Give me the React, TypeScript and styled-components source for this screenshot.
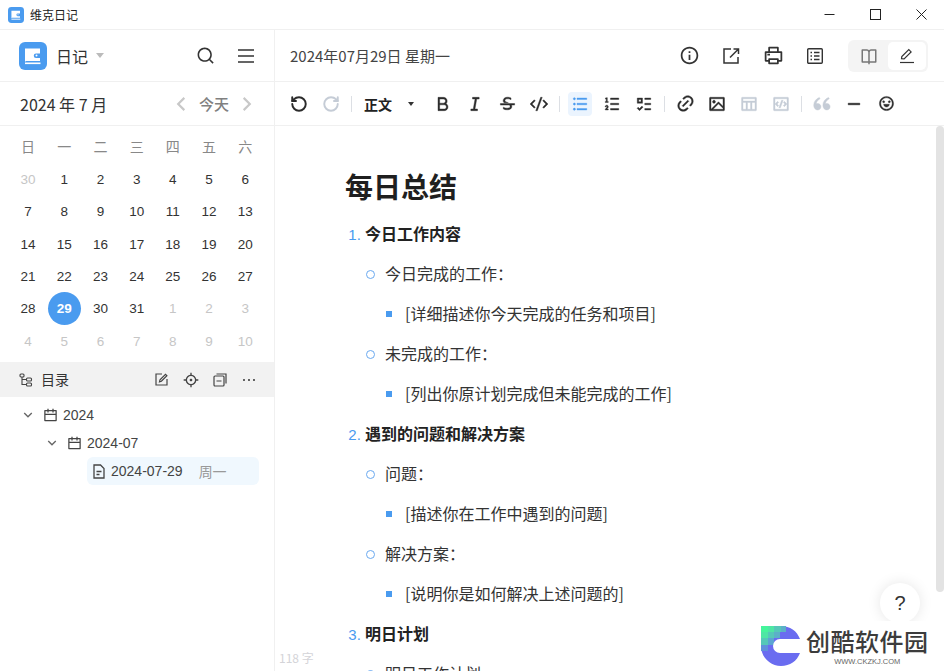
import { type FC, type ReactNode } from "react";
import styled, { createGlobalStyle } from "styled-components";
import { RotateCcw, RotateCw } from "lucide-react";
import {
  RiArrowDownSLine,
  RiArrowLeftSLine,
  RiArrowRightSLine,
  RiBold,
  RiCalendarLine,
  RiCodeBoxLine,
  RiCodeSSlashLine,
  RiDoubleQuotesL,
  RiEmotionLine,
  RiImageLine,
  RiInformationLine,
  RiItalic,
  RiLink,
  RiListOrdered2,
  RiListUnordered,
  RiMoreLine,
  RiPrinterLine,
  RiSearchLine,
  RiStrikethrough,
  RiSubtractLine,
  RiTableLine,
  RiListCheck3,
  RiFocus3Line,
  RiBookOpenLine,
} from "react-icons/ri";

const FONT = `"Noto Sans CJK SC", "Noto Sans", sans-serif`;

const GlobalStyle = createGlobalStyle`
  html, body {
    margin: 0;
    padding: 0;
    background: #fff;
  }
  body {
    font-family: ${FONT};
    color: #333;
    overflow: hidden;
  }
  * {
    box-sizing: border-box;
  }
`;

const Window = styled.div`
  position: relative;
  width: 944px;
  height: 671px;
  display: flex;
  flex-direction: column;
  overflow: hidden;
`;

const TitleBar = styled.div`
  height: 30px;
  flex: none;
  display: flex;
  align-items: center;
  padding-left: 8px;
  border-bottom: 1px solid #f0f0f0;
  font-size: 12px;
  color: #222;
`;

const TitleText = styled.span`
  margin-left: 6px;
`;

const WinButtons = styled.div`
  margin-left: auto;
  display: flex;
  height: 100%;
`;

const WinButton = styled.div`
  width: 46px;
  display: flex;
  align-items: center;
  justify-content: center;
`;

const Body = styled.div`
  flex: 1;
  display: flex;
  min-height: 0;
`;

const Sidebar = styled.aside`
  width: 275px;
  flex: none;
  border-right: 1px solid #f0f0f0;
  display: flex;
  flex-direction: column;
`;

const SideHeader = styled.div`
  height: 52px;
  flex: none;
  display: flex;
  align-items: center;
  padding: 0 20px 0 19px;
  border-bottom: 1px solid #f0f0f0;
`;

const NotebookName = styled.span`
  font-size: 16px;
  margin-left: 9px;
  color: #333;
`;

const Caret = styled.span<{ $color?: string; $w?: number }>`
  display: inline-block;
  width: 0;
  height: 0;
  margin-left: 8px;
  border-left: ${(p) => p.$w ?? 4}px solid transparent;
  border-right: ${(p) => p.$w ?? 4}px solid transparent;
  border-top: ${(p) => (p.$w ?? 4) + 1}px solid ${(p) => p.$color ?? "#bbb"};
`;

const HeaderIcons = styled.div`
  margin-left: auto;
  display: flex;
  align-items: center;
  gap: 23px;
  color: #333;
`;

const MonthBar = styled.div`
  height: 44px;
  flex: none;
  display: flex;
  align-items: center;
  padding: 0 14px 0 20px;
  border-bottom: 1px solid #f0f0f0;
  font-size: 16px;
  color: #333;
`;

const MonthNav = styled.div`
  margin-left: auto;
  display: flex;
  align-items: center;
  gap: 5px;
  color: #c8c8c8;
`;

const TodayLabel = styled.span`
  font-size: 15px;
  font-weight: 500;
  color: #808080;
`;

const Calendar = styled.div`
  flex: none;
  height: 236px;
  padding: 5px 10px;
  display: grid;
  grid-template-columns: repeat(7, 36.2px);
  grid-auto-rows: 32.33px;
  align-items: center;
  justify-items: center;
  font-size: 13px;
`;

const WeekHead = styled.div`
  color: #888;
  font-size: 14px;
  margin-top: -2px;
`;

const Day = styled.div<{ $muted?: boolean; $active?: boolean }>`
  width: 33px;
  height: 33px;
  border-radius: 50%;
  display: flex;
  align-items: center;
  justify-content: center;
  font-family: "Liberation Sans", ${FONT};
  font-size: 13.5px;
  font-weight: ${(p) => (p.$active ? 700 : 400)};
  color: ${(p) => (p.$active ? "#fff" : p.$muted ? "#c6c6c6" : "#333")};
  background: ${(p) => (p.$active ? "#4a9bef" : "transparent")};
`;

const CatalogBar = styled.div`
  height: 35px;
  flex: none;
  background: #f2f2f2;
  display: flex;
  align-items: center;
  padding: 0 17px 0 19px;
  font-size: 14px;
  color: #333;
`;

const CatalogTitle = styled.span`
  margin: -2px 0 0 8px;
`;

const CatalogIcons = styled.div`
  margin-left: auto;
  display: flex;
  align-items: center;
  gap: 14px;
  color: #444;
`;

const Tree = styled.div`
  padding-top: 4px;
  font-family: "Liberation Sans", ${FONT};
  font-size: 14px;
  color: #333;
`;

const TreeRow = styled.div<{ $indent: number; $selected?: boolean }>`
  height: 28px;
  display: flex;
  align-items: center;
  gap: 5px;
  margin-left: ${(p) => p.$indent}px;
  margin-right: ${(p) => (p.$selected ? "15px" : "0")};
  padding-left: ${(p) => (p.$selected ? "5px" : "0")};
  border-radius: 6px;
  background: ${(p) => (p.$selected ? "#f0f8fe" : "transparent")};
  color: #444;
`;

const Chevron = styled(RiArrowDownSLine)`
  color: #666;
  margin-right: 2px;
`;

const TreeWeek = styled.span`
  margin-left: 11px;
  color: #999;
  font-family: ${FONT};
  font-size: 14px;
`;

const Main = styled.main`
  flex: 1;
  min-width: 0;
  display: flex;
  flex-direction: column;
`;

const MainHeader = styled.div`
  height: 52px;
  flex: none;
  display: flex;
  align-items: center;
  padding: 0 16px 0 15px;
  border-bottom: 1px solid #f0f0f0;
  font-size: 15px;
  color: #444;
`;

const MainIcons = styled.div`
  margin-left: auto;
  display: flex;
  align-items: center;
  color: #333;
`;

const IconSlot = styled.div`
  width: 42px;
  display: flex;
  align-items: center;
  justify-content: center;
`;

const ModeSwitch = styled.div`
  margin-left: 12px;
  width: 80px;
  height: 32px;
  padding: 2px;
  border-radius: 6px;
  background: #f4f4f4;
  display: flex;
  justify-content: flex-end;
`;

const ModeButton = styled.div<{ $on?: boolean }>`
  width: ${(p) => (p.$on ? "39px" : "38px")};
  border-radius: 5px;
  display: flex;
  align-items: center;
  justify-content: center;
  background: ${(p) => (p.$on ? "#fff" : "transparent")};
  color: ${(p) => (p.$on ? "#333" : "#777")};
`;

const Toolbar = styled.div`
  height: 44px;
  flex: none;
  display: flex;
  align-items: center;
  padding-left: 12px;
  border-bottom: 1px solid #f0f0f0;
`;

const Tool = styled.div<{ $on?: boolean; $off?: boolean }>`
  width: 24px;
  height: 24px;
  margin-right: 8px;
  border-radius: 4px;
  display: flex;
  align-items: center;
  justify-content: center;
  background: ${(p) => (p.$on ? "#ebf4fe" : "transparent")};
  color: ${(p) => (p.$on ? "#4a9bef" : p.$off ? "#c5ccd6" : "#2b2b2b")};

  svg.ri {
    stroke: currentColor;
    stroke-width: 0.5;
  }
`;

const ToolSep = styled.span`
  width: 1px;
  height: 16px;
  background: #dcdfe4;
  margin: 0 8px 0 0;
`;

const Heading = styled.div`
  display: flex;
  align-items: center;
  margin: 0 17px 0 4px;
  font-size: 14px;
  font-weight: 700;
  color: #222;
`;

const HeadingCaret = styled(Caret)`
  margin-left: 16px;
`;

const Content = styled.div`
  flex: 1;
  min-height: 0;
  overflow: hidden;
  padding: 35px 0 0 70px;
`;

const Title = styled.h1`
  margin: 0 0 2px;
  font-size: 28px;
  line-height: 50px;
  font-weight: 700;
  color: #1f1f1f;
`;

const OList = styled.ol`
  margin: 0;
  padding: 0 0 0 20px;
  font-size: 16px;
  color: #333;

  & > li::marker {
    color: #4a9bef;
    font-family: "Liberation Sans", sans-serif;
    font-size: 15px;
  }
`;

const Item = styled.li`
  line-height: 40px;
`;

const Strong = styled.span`
  font-weight: 700;
  color: #222;
`;

const Sub = styled.ul`
  margin: 0;
  padding: 0 0 0 20px;
  list-style: none;
`;

const SubSub = styled(Sub)`
  padding-left: 20px;
`;

const Bullet = styled.li<{ $square?: boolean }>`
  position: relative;
  line-height: 40px;

  &::before {
    content: "";
    position: absolute;
    top: ${(p) => (p.$square ? "18px" : "17px")};
    left: -19px;
    width: ${(p) => (p.$square ? "6px" : "7px")};
    height: ${(p) => (p.$square ? "6px" : "7px")};
    border-radius: ${(p) => (p.$square ? "0" : "50%")};
    background: ${(p) => (p.$square ? "#4a9bef" : "#fff")};
    border: ${(p) => (p.$square ? "none" : "1.5px solid #6aa9f0")};
  }
`;

const WordCount = styled.div`
  position: absolute;
  left: 279px;
  top: 649px;
  font-size: 12px;
  color: #d4d4d8;
`;

const ScrollThumb = styled.div`
  position: absolute;
  right: 0;
  top: 126px;
  width: 8px;
  height: 466px;
  border-radius: 4px;
  background: #e3e3e3;
`;

const HelpButton = styled.div`
  position: absolute;
  left: 880px;
  top: 583px;
  width: 40px;
  height: 40px;
  border-radius: 50%;
  background: #fff;
  box-shadow: 0 0 14px rgba(0, 0, 0, 0.1);
  display: flex;
  align-items: center;
  justify-content: center;
  font-family: "Liberation Sans", sans-serif;
  font-size: 20px;
  color: #333;
`;

const Watermark = styled.div`
  position: absolute;
  right: 0;
  bottom: 0;
  width: 184px;
  height: 50px;
  background: #fff;
  display: flex;
  padding: 5px 0 0 1px;
`;

const WatermarkText = styled.div`
  margin: -5px 0 0 5px;
  display: flex;
  flex-direction: column;
  align-items: center;
`;

const WatermarkName = styled.div`
  font-size: 24px;
  line-height: 30px;
  margin-top: 5px;
  font-weight: 500;
  letter-spacing: 0.5px;
  color: #3c3c3c;
`;

const WatermarkUrl = styled.div`
  font-family: "Liberation Sans", sans-serif;
  font-size: 7.5px;
  line-height: 10px;
  margin-top: 1px;
  color: #666;
`;

const AppLogo: FC<{ size: number }> = ({ size }) => (
  <svg width={size} height={size} viewBox="0 0 28 28">
    <rect width="28" height="28" rx="6" fill="#4a9bef" />
    <path d="M6 6.5h15v5h-4a2 2 0 0 0 0 4.5h4v3H7.5A1.5 1.5 0 0 0 6 20z" fill="#fff" />
    <rect x="6" y="20.5" width="15.5" height="1.6" fill="#fff" />
    <circle cx="17.5" cy="13.6" r="1" fill="#fff" />
  </svg>
);

const MenuIcon: FC = () => (
  <svg width="16" height="16" viewBox="0 0 16 16">
    <path d="M0 2h16M0 8h16M0 14h16" stroke="#333" strokeWidth="1.6" />
  </svg>
);

const TreeIcon: FC = () => (
  <svg width="14" height="14" viewBox="0 0 14 14" fill="none" stroke="#444" strokeWidth="1.1">
    <rect x="1" y="1" width="4" height="3" rx="1" />
    <rect x="7.5" y="5" width="5" height="3" rx="1" />
    <rect x="7.5" y="10" width="5" height="3" rx="1" />
    <path d="M3 4v7.5h4.5M3 6.5h4.5" />
  </svg>
);

const NoteEditIcon: FC = () => (
  <svg width="15" height="15" viewBox="0 0 15 15" fill="none" stroke="#444" strokeWidth="1.2">
    <path d="M8 2H2v11h11V7" />
    <path d="M5.5 9.8l.5-2L11.5 2.3l1.4 1.4L7.4 9.2z" />
  </svg>
);

const CollapseIcon: FC = () => (
  <svg width="14" height="14" viewBox="0 0 14 14" fill="none" stroke="#444" strokeWidth="1.2">
    <rect x="1" y="3" width="10" height="10" rx="1" />
    <path d="M3.5 1h9.5v9.5M3.5 8h5" />
  </svg>
);

const FileIcon: FC = () => (
  <svg width="14" height="15" viewBox="0 0 14 15" fill="none" stroke="#444" strokeWidth="1.3">
    <path d="M2 1h6.5L12 4.5V14H2z" />
    <path d="M4.5 7.5h5M4.5 10.5h3" />
  </svg>
);

const ExportIcon: FC = () => (
  <svg width="18" height="18" viewBox="0 0 18 18" fill="none" stroke="#333" strokeWidth="1.5">
    <path d="M9 2H2v14h14v-6" />
    <path d="M8 10.5L16 2.5M11.5 2H16.5V7" />
  </svg>
);

const OutlineIcon: FC = () => (
  <svg width="16" height="16" viewBox="0 0 16 16" fill="none" stroke="#333" strokeWidth="1.4">
    <rect x="0.7" y="0.7" width="14.6" height="14.6" rx="1" />
    <path d="M7 4.5h5.5M7 8h5.5M7 11.5h5.5M3.5 4.5h1.5M3.5 8h1.5M3.5 11.5h1.5" />
  </svg>
);

const PenIcon: FC = () => (
  <svg width="16" height="16" viewBox="0 0 16 16" fill="none" stroke="#333" strokeWidth="1.2">
    <path d="M2.5 10.8l.3-2.3L9.8 1.6l2.3 2.3-7 7z" />
    <path d="M1 14.5h14" />
  </svg>
);

const pixels: [number, number, number, number, string][] = [
  [0, 0, 7, 6, "#45f59b"],
  [7, 0, 6, 6, "#4ee6a4"],
  [13, 0, 7, 6, "#55c8b8"],
  [20, 0, 5, 6, "#5cb0c8"],
  [0, 6, 7, 6, "#4ee6a4"],
  [7, 6, 6, 6, "#55c8b8"],
  [13, 6, 6, 6, "#5cb0c8"],
  [0, 12, 7, 7, "#55c8b8"],
  [7, 12, 6, 7, "#5ca4d2"],
  [0, 19, 7, 6, "#6090dc"],
];

const WatermarkLogo: FC = () => (
  <svg width="40" height="40" viewBox="0 0 40 40">
    <path d="M0 0H20C29 0 36 5 39 13H0zM0 13H40V27H39C36 35 29 40 20 40 9 40 0 31 0 20z" fill="#6a6cf0" />
    {pixels.map(([x, y, w, h, c]) => (
      <rect key={`${x}-${y}`} x={x} y={y} width={w} height={h} fill={c} />
    ))}
    <path d="M19 13H40V27H19A7 7 0 0 1 19 13z" fill="#fff" />
  </svg>
);

const week = ["日", "一", "二", "三", "四", "五", "六"];

const days: { n: number; muted?: boolean }[] = [
  { n: 30, muted: true },
  ...Array.from({ length: 31 }, (_, i) => ({ n: i + 1 })),
  ...Array.from({ length: 10 }, (_, i) => ({ n: i + 1, muted: true })),
];

const outline: { title: string; items: [string, string][] }[] = [
  {
    title: "今日工作内容",
    items: [
      ["今日完成的工作：", "[详细描述你今天完成的任务和项目]"],
      ["未完成的工作：", "[列出你原计划完成但未能完成的工作]"],
    ],
  },
  {
    title: "遇到的问题和解决方案",
    items: [
      ["问题：", "[描述你在工作中遇到的问题]"],
      ["解决方案：", "[说明你是如何解决上述问题的]"],
    ],
  },
];

const T: FC<{ children: ReactNode; on?: boolean; off?: boolean }> = ({ children, on, off }) => (
  <Tool $on={on} $off={off}>
    {children}
  </Tool>
);

const App: FC = () => {
  return (
    <Window>
      <GlobalStyle />
      <TitleBar>
        <AppLogo size={16} />
        <TitleText>维克日记</TitleText>
        <WinButtons>
          <WinButton>
            <svg width="11" height="11" viewBox="0 0 11 11">
              <path d="M0.5 5.5h10" stroke="#222" />
            </svg>
          </WinButton>
          <WinButton>
            <svg width="11" height="11" viewBox="0 0 11 11" fill="none">
              <rect x="0.5" y="0.5" width="10" height="10" stroke="#222" />
            </svg>
          </WinButton>
          <WinButton>
            <svg width="11" height="11" viewBox="0 0 11 11">
              <path d="M0.5 0.5l10 10M10.5 0.5l-10 10" stroke="#222" />
            </svg>
          </WinButton>
        </WinButtons>
      </TitleBar>
      <Body>
        <Sidebar>
          <SideHeader>
            <AppLogo size={28} />
            <NotebookName>日记</NotebookName>
            <Caret />
            <HeaderIcons>
              <RiSearchLine size={19} />
              <MenuIcon />
            </HeaderIcons>
          </SideHeader>
          <MonthBar>
            2024 年 7 月
            <MonthNav>
              <RiArrowLeftSLine size={26} />
              <TodayLabel>今天</TodayLabel>
              <RiArrowRightSLine size={26} />
            </MonthNav>
          </MonthBar>
          <Calendar>
            {week.map((w) => (
              <WeekHead key={w}>{w}</WeekHead>
            ))}
            {days.map((d, i) => (
              <Day key={i} $muted={d.muted} $active={!d.muted && d.n === 29}>
                {d.n}
              </Day>
            ))}
          </Calendar>
          <CatalogBar>
            <TreeIcon />
            <CatalogTitle>目录</CatalogTitle>
            <CatalogIcons>
              <NoteEditIcon />
              <RiFocus3Line size={16} />
              <CollapseIcon />
              <RiMoreLine size={16} />
            </CatalogIcons>
          </CatalogBar>
          <Tree>
            <TreeRow $indent={20}>
              <Chevron size={16} />
              <RiCalendarLine size={15} />
              2024
            </TreeRow>
            <TreeRow $indent={44}>
              <Chevron size={16} />
              <RiCalendarLine size={15} />
              2024-07
            </TreeRow>
            <TreeRow $indent={87} $selected>
              <FileIcon />
              2024-07-29
              <TreeWeek>周一</TreeWeek>
            </TreeRow>
          </Tree>
        </Sidebar>
        <Main>
          <MainHeader>
            2024年07月29日 星期一
            <MainIcons>
              <IconSlot>
                <RiInformationLine size={21} />
              </IconSlot>
              <IconSlot>
                <ExportIcon />
              </IconSlot>
              <IconSlot>
                <RiPrinterLine size={21} />
              </IconSlot>
              <IconSlot>
                <OutlineIcon />
              </IconSlot>
            </MainIcons>
            <ModeSwitch>
              <ModeButton>
                <RiBookOpenLine size={18} />
              </ModeButton>
              <ModeButton $on>
                <PenIcon />
              </ModeButton>
            </ModeSwitch>
          </MainHeader>
          <Toolbar>
            <T>
              <RotateCcw size={18} strokeWidth={2.6} />
            </T>
            <T off>
              <RotateCw size={18} strokeWidth={2.6} />
            </T>
            <ToolSep />
            <Heading>
              正文
              <HeadingCaret $color="#333" $w={3} />
            </Heading>
            <T>
              <RiBold className="ri" size={20} />
            </T>
            <T>
              <RiItalic className="ri" size={20} />
            </T>
            <T>
              <RiStrikethrough className="ri" size={19} />
            </T>
            <T>
              <RiCodeSSlashLine className="ri" size={18} />
            </T>
            <ToolSep />
            <T on>
              <RiListUnordered className="ri" size={18} />
            </T>
            <T>
              <RiListOrdered2 className="ri" size={18} />
            </T>
            <T>
              <RiListCheck3 className="ri" size={18} />
            </T>
            <ToolSep />
            <T>
              <RiLink className="ri" size={19} />
            </T>
            <T>
              <RiImageLine className="ri" size={18} />
            </T>
            <T off>
              <RiTableLine className="ri" size={18} />
            </T>
            <T off>
              <RiCodeBoxLine className="ri" size={18} />
            </T>
            <ToolSep />
            <T off>
              <RiDoubleQuotesL className="ri" size={22} />
            </T>
            <T>
              <RiSubtractLine className="ri" size={20} />
            </T>
            <T>
              <RiEmotionLine className="ri" size={17} />
            </T>
          </Toolbar>
          <Content>
            <Title>每日总结</Title>
            <OList>
              {outline.map((o) => (
                <Item key={o.title}>
                  <Strong>{o.title}</Strong>
                  <Sub>
                    {o.items.map(([a, b]) => (
                      <Bullet key={a}>
                        {a}
                        <SubSub>
                          <Bullet $square>{b}</Bullet>
                        </SubSub>
                      </Bullet>
                    ))}
                  </Sub>
                </Item>
              ))}
              <Item>
                <Strong>明日计划</Strong>
                <Sub>
                  <Bullet>明日工作计划</Bullet>
                </Sub>
              </Item>
            </OList>
          </Content>
        </Main>
      </Body>
      <WordCount>118 字</WordCount>
      <ScrollThumb />
      <HelpButton>?</HelpButton>
      <Watermark>
        <WatermarkLogo />
        <WatermarkText>
          <WatermarkName>创酷软件园</WatermarkName>
          <WatermarkUrl>WWW.CKZKJ.COM</WatermarkUrl>
        </WatermarkText>
      </Watermark>
    </Window>
  );
};

export default App;
